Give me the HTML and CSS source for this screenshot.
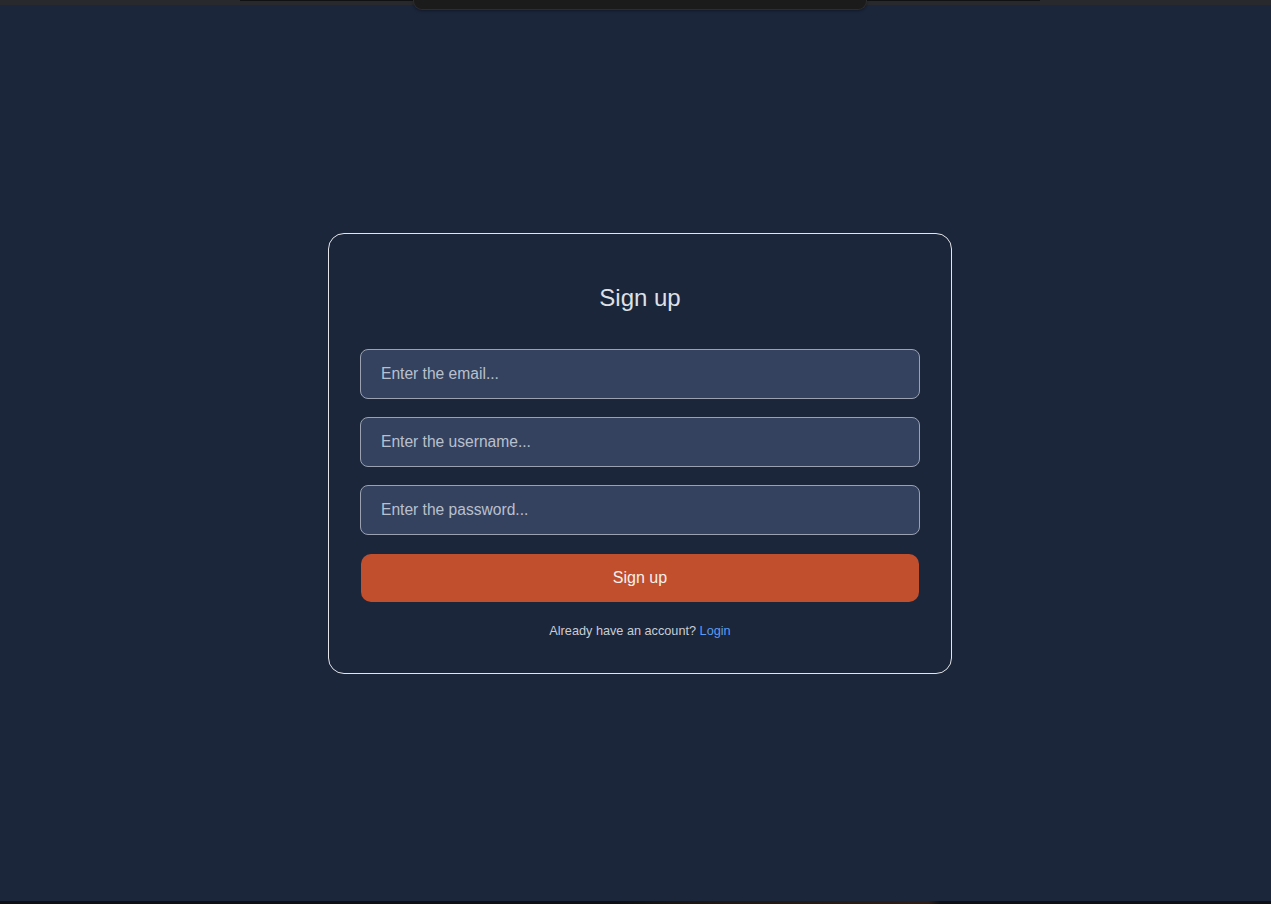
FILE: index.html
```html
<!DOCTYPE html>
<html lang="en">
<head>
<meta charset="utf-8">
<title>Sign up</title>
<link rel="stylesheet" href="styles.css">
</head>
<body>
<div class="topbar">
  <div class="topline"></div>
  <div class="notch"></div>
</div>
<main class="page">
  <form class="card">
    <h2 class="title">Sign up</h2>
    <div class="fields">
      <input class="field" type="email" placeholder="Enter the email...">
      <input class="field" type="text" placeholder="Enter the username...">
      <input class="field" type="password" placeholder="Enter the password...">
    </div>
    <button class="submit" type="button">Sign up</button>
    <p class="footer">Already have an account? <a class="link" href="#">Login</a></p>
  </form>
</main>
<div class="bottombar"></div>
</body>
</html>
```
FILE: styles.css
```css
* { box-sizing: border-box; }
html, body { margin: 0; padding: 0; }
body {
  background: #1b263b;
  font-family: "Liberation Sans", Arial, sans-serif;
  height: 904px;
  overflow: hidden;
  display: flex;
  flex-direction: column;
}
.topbar {
  height: 5px;
  background: #27292c;
  position: relative;
  flex: none;
}
.topline {
  position: absolute;
  left: 240px;
  width: 800px;
  top: 0;
  height: 1px;
  background: #101113;
}
.notch {
  position: absolute;
  left: 413px;
  width: 454px;
  top: 0;
  height: 10px;
  background: #1b1b1b;
  border: 1px solid #2c2d2f;
  border-top: none;
  border-radius: 0 0 9px 9px;
  box-shadow: 0 1px 3px rgba(0,0,0,0.35);
  z-index: 2;
}
.page {
  flex: 1;
  display: flex;
  align-items: flex-start;
  justify-content: center;
  padding: 228px 0 0 9px;
}
.card {
  width: 624px;
  border: 1px solid #e3e5e8;
  border-radius: 16px;
  padding: 49px 31px 34px;
  display: flex;
  flex-direction: column;
}
.title {
  margin: 0 0 36px;
  font-size: 24px;
  line-height: 30px;
  font-weight: 400;
  color: #dde1e7;
  text-align: center;
}
.fields {
  display: flex;
  flex-direction: column;
  gap: 18px;
}
.field {
  height: 50px;
  width: 100%;
  background: #344260;
  border: 1px solid #9aa2b2;
  border-radius: 8px;
  padding: 0 20px;
  font-family: inherit;
  font-size: 15.6px;
  color: #e6e9ee;
  outline: none;
}
.field::placeholder { color: #b9c0cd; }
.submit {
  margin: 19px 1px 0;
  height: 48px;
  background: #c14f2d;
  border: none;
  border-radius: 10px;
  color: #f4f1ef;
  font-family: inherit;
  font-size: 16px;
  cursor: pointer;
}
.footer {
  margin: 21px 0 0;
  font-size: 12.7px;
  line-height: 16px;
  text-align: center;
  color: #c9cdd5;
}
.link {
  color: #5b9cf0;
  text-decoration: none;
}
.bottombar {
  height: 3px;
  flex: none;
  background: linear-gradient(90deg, #0d0f12 0%, #0d0f12 48%, #1d1714 55%, #2a1d17 70%, #2d1f18 73%, #0d0f12 74%, #0d0f12 100%);
}
```
